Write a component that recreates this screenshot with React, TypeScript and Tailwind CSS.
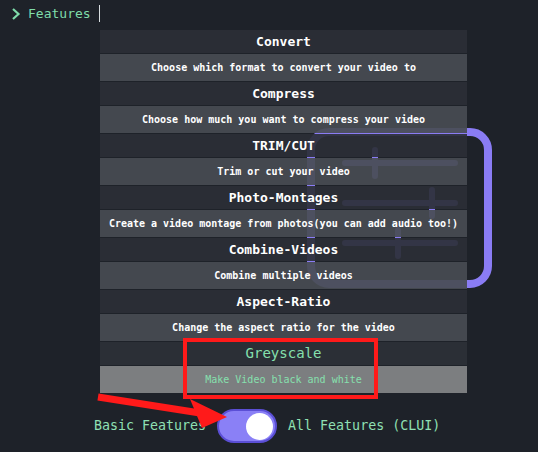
import React from "react";

const FEATURES = [
  { title: "Convert", desc: "Choose which format to convert your video to" },
  { title: "Compress", desc: "Choose how much you want to compress your video" },
  { title: "TRIM/CUT", desc: "Trim or cut your video" },
  { title: "Photo-Montages", desc: "Create a video montage from photos(you can add audio too!)" },
  { title: "Combine-Videos", desc: "Combine multiple videos" },
  { title: "Aspect-Ratio", desc: "Change the aspect ratio for the video" },
  { title: "Greyscale", desc: "Make Video black and white", active: true },
];

export default function App() {
  return (
    <div
      className="relative w-[538px] h-[452px] overflow-hidden bg-[#1e2229] text-white"
      style={{ fontFamily: '"DejaVu Sans Mono", "Liberation Mono", monospace' }}
    >
      {/* header prompt */}
      <div className="flex items-center h-[26px] pl-[11px] pt-[1px] text-[13px] text-[#7fdcaa]">
        <svg width="10" height="14" viewBox="0 0 10 14" className="mr-[7px]">
          <path d="M2 2 L7.5 7 L2 12" stroke="#7fdcaa" strokeWidth="2.2" fill="none" />
        </svg>
        <span>Features</span>
        <span className="ml-[8px] w-[1px] h-[17px] bg-[#d8dde0]" />
      </div>

      {/* sliders button behind the list */}
      <div className="absolute left-[307px] top-[128px] w-[185px] h-[160px] rounded-[22px] border-[8px] border-[#8a7cf4]" />
      <svg className="absolute left-[330px] top-[145px]" width="140" height="120" viewBox="0 0 140 120">
        <g stroke="#8a7cf4" strokeWidth="6" strokeLinecap="round">
          <line x1="15" y1="18" x2="125" y2="18" />
          <line x1="45" y1="5" x2="45" y2="31" />
          <line x1="15" y1="58" x2="125" y2="58" />
          <line x1="102" y1="45" x2="102" y2="71" />
          <line x1="15" y1="98" x2="125" y2="98" />
          <line x1="68" y1="85" x2="68" y2="111" />
        </g>
      </svg>

      {/* feature list */}
      <div className="relative ml-[100px] mt-[4px] w-[367px] flex flex-col gap-[1px]">
        {FEATURES.map((f) => (
          <React.Fragment key={f.title}>
            <div
              className={
                f.active
                  ? "h-[23px] flex items-center justify-center bg-[#2b2f36] text-[14px] text-[#86e0ae]"
                  : "h-[23px] flex items-center justify-center bg-[#2b2f36]/[0.92] text-[13px] font-bold text-white"
              }
            >
              {f.title}
            </div>
            <div
              className={
                f.active
                  ? "h-[27px] flex items-center justify-center bg-[#7c7e80] text-[10px] text-[#86e0ae]"
                  : "h-[27px] flex items-center justify-center bg-[#484c53]/[0.92] text-[10px] font-bold text-white"
              }
            >
              {f.desc}
            </div>
          </React.Fragment>
        ))}
      </div>

      {/* highlight box */}
      <div className="absolute left-[183px] top-[338px] w-[195px] h-[61px] border-[4px] border-[#ff1a1a]" />

      {/* toggle row */}
      <div className="flex items-center ml-[94px] mt-[16px] text-[13.3px] text-[#8fe0b4]">
        <span>Basic Features</span>
        <div className="ml-[11px] w-[60px] h-[34px] rounded-full bg-[#8a80f6] border-[2px] border-[#5b4fd6] flex items-center justify-end pr-[2px]">
          <div className="w-[27px] h-[27px] rounded-full bg-white" />
        </div>
        <span className="ml-[11px]">All Features (CLUI)</span>
      </div>

      {/* red arrow */}
      <svg className="absolute left-0 top-0 pointer-events-none" width="538" height="452">
        <line x1="98" y1="397" x2="200" y2="413" stroke="#ff1a1a" strokeWidth="7" />
        <polygon points="190,399 227,417 202,428" fill="#ff1a1a" />
      </svg>
    </div>
  );
}
